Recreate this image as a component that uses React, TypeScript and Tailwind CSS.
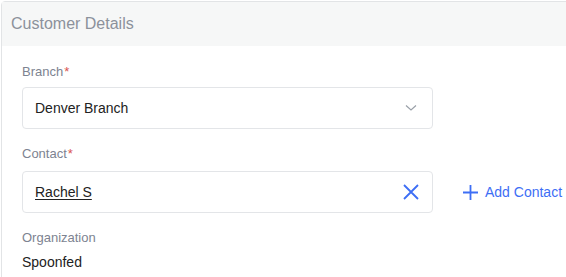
import React from 'react';

const fieldClass =
  'flex h-[42px] w-[411px] items-center justify-between rounded-[4px] border border-[#e3e5e8] bg-white pl-[12px] pr-[12px]';

const Label = ({ text, required }: { text: string; required?: boolean }) => (
  <div className="flex h-[16px] items-center text-[13px] leading-[16px] text-[#7d8391]">
    {text}
    {required && <span className="ml-[1px] text-[#d9534f]">*</span>}
  </div>
);

const App = () => {
  return (
    <div
      className="h-[277px] w-[566px] overflow-hidden bg-white pl-[1px] pt-[1px]"
      style={{ fontFamily: '"Liberation Sans", Arial, sans-serif' }}
    >
      <div className="h-[300px] w-[600px] rounded-tl-[4px] border border-[#e2e4e6]">
        <div className="flex h-[44px] items-center bg-[#f6f7f7] pl-[9px] text-[16px] text-[#8c919b]">
          Customer Details
        </div>

        <div className="pl-[20px] pt-[18px]">
          <Label text="Branch" required />
          <div className="mt-[7px] flex">
            <div className={fieldClass}>
              <span className="text-[14px] text-[#222]">Denver Branch</span>
              <svg width="12" height="8" viewBox="0 0 12 8" className="mr-[3px]">
                <path d="M1 1.5 L6 6 L11 1.5" fill="none" stroke="#9aa0a8" strokeWidth="1.2" />
              </svg>
            </div>
          </div>

          <div className="mt-[17px]">
            <Label text="Contact" required />
          </div>
          <div className="mt-[9px] flex items-center">
            <div className={fieldClass}>
              <span className="text-[14px] text-[#222] underline underline-offset-2">Rachel S</span>
              <svg width="16" height="16" viewBox="0 0 16 16" className="mr-[1px]">
                <path d="M1 1 L15 15 M15 1 L1 15" stroke="#3d6ef5" strokeWidth="1.8" />
              </svg>
            </div>
            <div className="ml-[30px] flex items-center text-[14px] text-[#3d6ef5]">
              <svg width="15" height="15" viewBox="0 0 15 15" className="mr-[7px]">
                <path d="M7.5 0 V15 M0 7.5 H15" stroke="#3d6ef5" strokeWidth="1.8" />
              </svg>
              Add Contact
            </div>
          </div>

          <div className="mt-[17px]">
            <Label text="Organization" />
          </div>
          <div className="mt-[8px] text-[14px] leading-[16px] text-[#222]">Spoonfed</div>
        </div>
      </div>
    </div>
  );
};

export default App;
